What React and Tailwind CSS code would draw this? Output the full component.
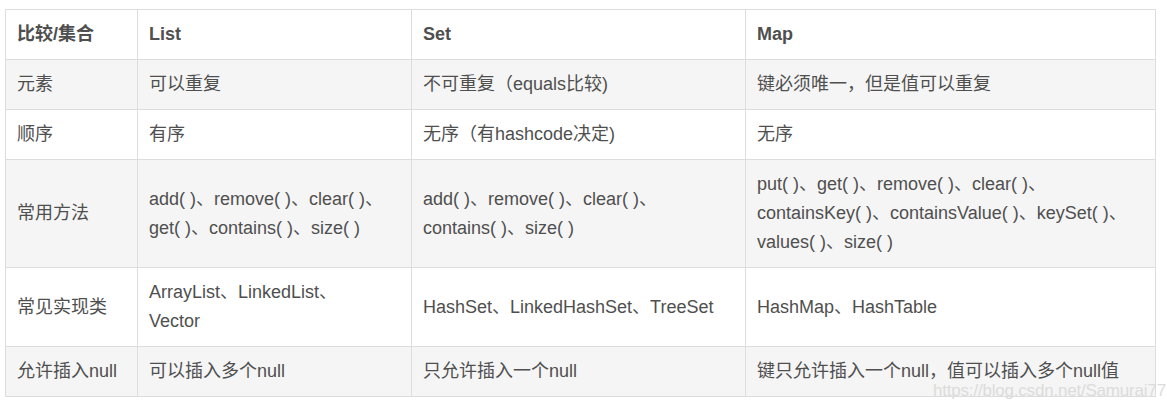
const rows = [
  [["元素"], ["可以重复"], ["不可重复（equals比较)"], ["键必须唯一，但是值可以重复"]],
  [["顺序"], ["有序"], ["无序（有hashcode决定)"], ["无序"]],
  [
    ["常用方法"],
    ["add( )、remove( )、clear( )、", "get( )、contains( )、size( )"],
    ["add( )、remove( )、clear( )、", "contains( )、size( )"],
    ["put( )、get( )、remove( )、clear( )、", "containsKey( )、containsValue( )、keySet( )、", "values( )、size( )"],
  ],
  [["常见实现类"], ["ArrayList、LinkedList、", "Vector"], ["HashSet、LinkedHashSet、TreeSet"], ["HashMap、HashTable"]],
  [["允许插入null"], ["可以插入多个null"], ["只允许插入一个null"], ["键只允许插入一个null，值可以插入多个null值"]],
];

const head = ["比较/集合", "List", "Set", "Map"];

export default function App() {
  return (
    <div
      className="relative w-[1167px] h-[409px] overflow-hidden bg-white pl-[5px] pt-[9px] text-[#4f4f4f]"
      style={{ fontFamily: '"Liberation Sans", "Noto Sans CJK SC", sans-serif' }}
    >
      <table className="table-fixed border-collapse w-[1150px] text-[18px] leading-[29px]">
        <colgroup>
          <col className="w-[132px]" />
          <col className="w-[274px]" />
          <col className="w-[334px]" />
          <col className="w-[410px]" />
        </colgroup>
        <thead>
          <tr className="bg-white">
            {head.map((h) => (
              <th key={h} className="border border-[#dddddd] px-[11px] py-[10px] text-left font-bold align-middle">
                {h}
              </th>
            ))}
          </tr>
        </thead>
        <tbody>
          {rows.map((r, i) => (
            <tr key={i} className={i % 2 === 0 ? "bg-[#f5f5f5]" : "bg-white"}>
              {r.map((lines, j) => (
                <td key={j} className="border border-[#dddddd] px-[11px] py-[10px] align-middle whitespace-nowrap">
                  {lines.map((l, k) => (
                    <div key={k}>{l}</div>
                  ))}
                </td>
              ))}
            </tr>
          ))}
        </tbody>
      </table>
      <div className="absolute left-[933px] top-[380px] whitespace-nowrap text-[17px] leading-[22px] text-[#dcdcdc] tracking-[-0.2px]">
        https://blog.csdn.net/Samurai77
      </div>
    </div>
  );
}
